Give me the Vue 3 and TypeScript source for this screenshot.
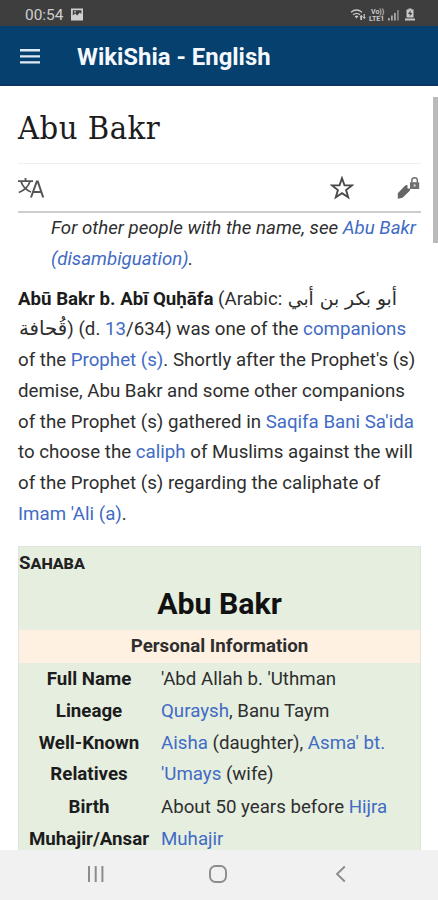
<script setup lang="ts">
interface Seg {
  t: string
  link?: boolean
  bold?: boolean
  ar?: boolean
}
interface Line {
  id: string
  segs: Seg[]
}
interface Row {
  label: string
  value: Seg[]
  h: string
}

const lines: Line[] = [
  { id: 'l1', segs: [{ t: 'Abū Bakr b. Abī Quḥāfa', bold: true }, { t: ' (Arabic: ' }, { t: 'أبو بكر بن أبي', ar: true }] },
  { id: 'l2', segs: [{ t: 'قُحافة', ar: true }, { t: ') (d. ' }, { t: '13', link: true }, { t: '/634) was one of the ' }, { t: 'companions', link: true }] },
  { id: 'l3', segs: [{ t: 'of the ' }, { t: 'Prophet (s)', link: true }, { t: ". Shortly after the Prophet's (s)" }] },
  { id: 'l4', segs: [{ t: 'demise, Abu Bakr and some other companions' }] },
  { id: 'l5', segs: [{ t: 'of the Prophet (s) gathered in ' }, { t: "Saqifa Bani Sa'ida", link: true }] },
  { id: 'l6', segs: [{ t: 'to choose the ' }, { t: 'caliph', link: true }, { t: ' of Muslims against the will' }] },
  { id: 'l7', segs: [{ t: 'of the Prophet (s) regarding the caliphate of' }] },
  { id: 'l8', segs: [{ t: "Imam 'Ali (a)", link: true }, { t: '.' }] },
]

const rows: Row[] = [
  { label: 'Full Name', value: [{ t: "'Abd Allah b. 'Uthman" }], h: 'tall' },
  { label: 'Lineage', value: [{ t: 'Quraysh', link: true }, { t: ', Banu Taym' }], h: 'tall' },
  { label: 'Well-Known', value: [{ t: 'Aisha', link: true }, { t: ' (daughter), ' }, { t: "Asma' bt.", link: true }], h: 'short' },
  { label: 'Relatives', value: [{ t: "'Umays", link: true }, { t: ' (wife)' }], h: 'short' },
  { label: 'Birth', value: [{ t: 'About 50 years before ' }, { t: 'Hijra', link: true }], h: 'tall' },
  { label: 'Muhajir/Ansar', value: [{ t: 'Muhajir', link: true }], h: 'tall' },
]
</script>

<template>
  <div class="phone">
    <header class="status">
      <span class="clock">00:54</span>
      <svg class="pic" viewBox="0 0 14 13" width="14" height="13">
        <path fill="#d0d0d0" fill-rule="evenodd" d="M1 .5h12v12H1zM2.800 2.300v5.200l2.400-2 2 2 2.600-3 1.600 1.600V2.300z" />
        <circle cx="5" cy="3.800" r=".9" fill="#d0d0d0" />
      </svg>
      <span class="gap"></span>
      <svg class="radios" viewBox="0 0 66 16" width="66" height="16">
        <path fill="none" stroke="#c9c9c9" stroke-width="1.400" d="M1 5.200Q6.500 .8 12 5.200M3 7.700Q6.500 5 10 7.700" />
        <path fill="#c9c9c9" d="M4.600 9.200Q6.500 7.800 8.400 9.200L6.500 11.500zM9.500 10l1.700-2.200L13 10h-1v3h-1.700v-3zM12.600 10h1V7h1.200v3h1l-1.600 2.200z" />
        <text x="21" y="7" class="tiny">Vo))</text>
        <text x="19" y="14" class="tiny">LTE1</text>
        <path fill="#a8a8a8" d="M38 11h1.800v2.500H38zM41 8.500h1.800v5H41zM44 6h1.800v7.500H44z" />
        <path fill="#858585" d="M47 3h1.800v10.500H47z" />
        <path fill="#c9c9c9" d="M56.500 2.500h2V1.500h3v1h2V10.500h-7z" />
        <path fill="#c9c9c9" d="M55 11.500h10v2H55z" />
        <path fill="#444" d="M60.500 3.200L58 7h1.800v2.200L62.400 6h-1.700z" />
      </svg>
    </header>

    <nav class="appbar">
      <svg class="burger" viewBox="0 0 20 16" width="20" height="16">
        <path fill="#dfeaf5" d="M0 0h20v2.500H0zM0 6.200h20v2.300H0zM0 12.200h20v2.300H0z" />
      </svg>
      <span class="brand">WikiShia - English</span>
    </nav>

    <main class="page">
      <h1 class="title">Abu Bakr</h1>
      <div class="tools">
        <svg class="lang" viewBox="0 0 26 22" width="26" height="22">
          <g fill="none" stroke="#555" stroke-width="1.800">
            <path d="M0 4.200H15M7.500 1V4.200M3 4.500Q5.500 12 13 15M12 4.500Q9.500 12 .8 15.500" />
            <path stroke-width="2" d="M13 20.500L18.800 4.500H19.800L25.200 20.500M15 15H23.500" />
          </g>
        </svg>
        <span class="gap"></span>
        <svg class="star" viewBox="0 0 24 24" width="24" height="24">
          <path fill="none" stroke="#4a4a4a" stroke-width="1.900" d="M12 2.200L14.500 9.300L22 9.400L16.100 14L18.200 21.300L12 17.100L5.800 21.300L7.900 14L2 9.400L9.500 9.300Z" />
        </svg>
        <svg class="edit" viewBox="0 0 24 24" width="24" height="24">
          <path fill="#666" d="M.8 22.800V17.200L8.200 9.600Q9.600 8.600 10.500 9.200V12.500H13.200L12.800 14.800L5.500 21.800Z" />
          <path fill="#707070" d="M13 6.200h9.200v6.800H13z" />
          <path fill="none" stroke="#707070" stroke-width="1.500" d="M14.900 6.500V4.200Q14.900 1.700 17.600 1.700T20.300 4.200V6.500" />
          <path fill="#ddd" d="M16.700 8.400h1.800v2.200h-1.800z" />
        </svg>
      </div>

      <div class="hatnote">
        <div>For other people with the name, see <a>Abu Bakr</a></div>
        <div><a>(disambiguation)</a>.</div>
      </div>

      <div class="lead">
        <div v-for="l in lines" :key="l.id" class="line" :class="l.id"><span v-for="(s, i) in l.segs" :key="i" :class="{ link: s.link, bold: s.bold, ar: s.ar }">{{ s.t }}</span></div>
      </div>

      <section class="box">
        <div class="kind">Sahaba</div>
        <div class="name">Abu Bakr</div>
        <div class="band">Personal Information</div>
        <div v-for="r in rows" :key="r.label" class="row" :class="r.h">
          <div class="label">{{ r.label }}</div>
          <div class="value"><span v-for="(s, i) in r.value" :key="i" :class="{ link: s.link }">{{ s.t }}</span></div>
        </div>
      </section>
      <div class="scroll"></div>
    </main>

    <footer class="keys">
      <svg viewBox="0 0 18 18" width="18" height="18"><path fill="none" stroke="#8c8c8c" stroke-width="2" d="M2 1V17M8.700 1V17M15.400 1V17" /></svg>
      <svg viewBox="0 0 20 20" width="20" height="20"><rect x="2" y="2" width="16" height="16" rx="5.500" fill="none" stroke="#8c8c8c" stroke-width="1.900" /></svg>
      <svg viewBox="0 0 12 18" width="12" height="18"><path fill="none" stroke="#8c8c8c" stroke-width="1.900" d="M9.800 1.500L2 9L9.800 16.500" /></svg>
    </footer>
  </div>
</template>

<style>
body {
  margin: 0;
  overflow: hidden;
}
</style>

<style scoped>
.phone {
  width: 438px;
  height: 900px;
  display: flex;
  flex-direction: column;
  overflow: hidden;
  background: #fff;
  color: #2e2e2e;
  font-family: Roboto, "DejaVu Sans", sans-serif;
  font-size: 18.7px;
  white-space: pre;
}
.gap {
  flex: 1;
}
.status {
  flex: none;
  height: 26px;
  box-sizing: border-box;
  display: flex;
  align-items: center;
  padding: 3px 22px 0 25px;
  background: #3e3e3e;
  color: #cfcfcf;
}
.clock {
  font-size: 15.4px;
  width: 39px;
}
.pic {
  margin-left: 6px;
}
.tiny {
  font-size: 7px;
  font-weight: 700;
  fill: #c9c9c9;
}
.appbar {
  flex: none;
  height: 60px;
  box-sizing: border-box;
  display: flex;
  align-items: center;
  padding: 3px 20px 0;
  background: #05406f;
  border-bottom: 2px solid #0b3363;
}
.brand {
  margin-left: 37px;
  color: #f4f8fc;
  font-size: 23.9px;
  font-weight: 700;
}
.page {
  position: relative;
  flex: 1;
  min-height: 0;
  overflow: hidden;
  padding: 0 17px 0 18px;
}
.title {
  margin: 0;
  height: 78px;
  box-sizing: border-box;
  padding-top: 22px;
  border-bottom: 1px solid #efefef;
  font-family: "DejaVu Serif Condensed", "DejaVu Serif", serif;
  font-stretch: condensed;
  font-size: 32.4px;
  font-weight: 400;
  letter-spacing: 0.5px;
  line-height: 40px;
  color: #1c1c1c;
}
.tools {
  display: flex;
  align-items: center;
  height: 49px;
  box-sizing: border-box;
  border-bottom: 2px solid #cdcdcd;
}
.star {
  margin-right: 43px;
}
.hatnote {
  padding: 0 0 0 33px;
  font-style: italic;
  line-height: 31px;
}
a,
.link {
  color: #416bc4;
}
.bold {
  font-weight: 700;
  color: #1c1c1c;
}
.lead {
  margin-top: 8.5px;
  line-height: 30.8px;
}
.line {
  height: 30.8px;
}
.ar {
  font-family: "DejaVu Sans", sans-serif;
  line-height: 1;
}
.l1 .ar {
  margin-left: 1px;
}
.l2 .ar {
  margin-left: 1px;
  font-size: 19.8px;
}
.box {
  margin-top: 16.1px;
  height: 340px;
  box-sizing: border-box;
  border: 1px solid #dde6d8;
  background: #e6eee0;
}
.kind {
  height: 34px;
  line-height: 32px;
  font-weight: 700;
  font-variant: small-caps;
  color: #222;
}
.name {
  height: 49px;
  line-height: 46px;
  text-align: center;
  font-size: 30.3px;
  font-weight: 700;
  color: #111;
}
.band {
  height: 33px;
  line-height: 33px;
  background: #fff1e1;
  text-align: center;
  font-weight: 700;
}
.row {
  display: flex;
}
.tall {
  height: 32.4px;
  line-height: 32.4px;
}
.short {
  height: 31.6px;
  line-height: 31.6px;
}
.label {
  width: 140px;
  margin-right: 2px;
  text-align: center;
  font-weight: 700;
  color: #1c1c1c;
}
.scroll {
  position: absolute;
  top: 11px;
  right: 0;
  width: 5px;
  height: 146px;
  background: #bababa;
}
.keys {
  flex: none;
  height: 50px;
  display: grid;
  grid-template-columns: 121px 127px auto;
  align-items: center;
  box-sizing: border-box;
  padding: 0 0 2px 87px;
  background: #f1f1f1;
}
</style>
